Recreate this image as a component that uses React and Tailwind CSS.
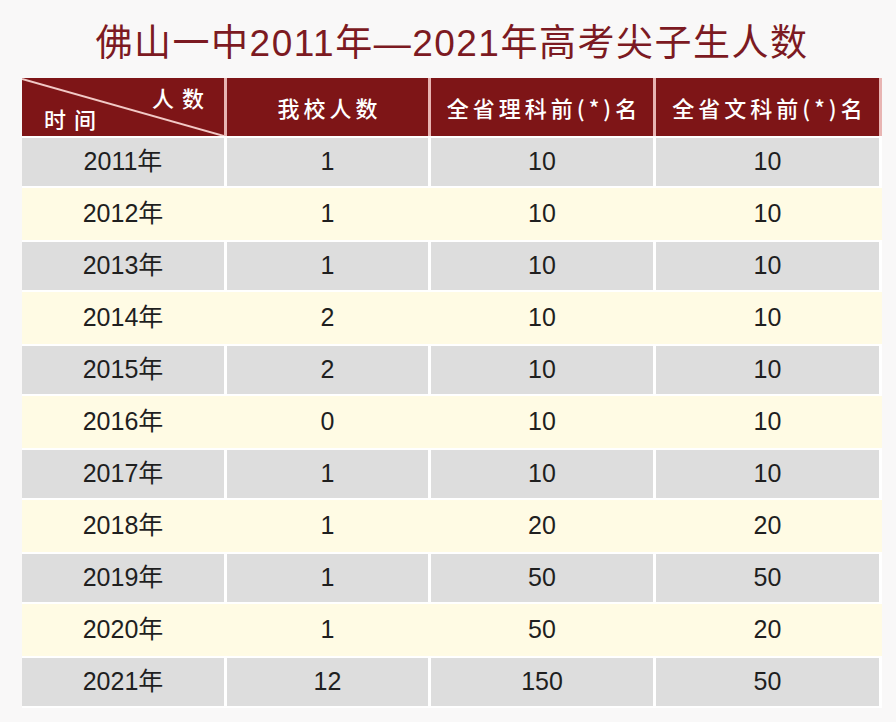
import React from "react"

const rows = [
  ["2011年", "1", "10", "10"],
  ["2012年", "1", "10", "10"],
  ["2013年", "1", "10", "10"],
  ["2014年", "2", "10", "10"],
  ["2015年", "2", "10", "10"],
  ["2016年", "0", "10", "10"],
  ["2017年", "1", "10", "10"],
  ["2018年", "1", "20", "20"],
  ["2019年", "1", "50", "50"],
  ["2020年", "1", "50", "20"],
  ["2021年", "12", "150", "50"],
]

const cols = "grid grid-cols-[202px_201px_222px_223px]"
const cjk = { fontFamily: '"Noto Sans CJK SC", "Noto Sans", sans-serif' }
const num = { fontFamily: '"Liberation Sans", "Noto Sans CJK SC", sans-serif' }

export default function App() {
  return (
    <div className="w-[896px] h-[722px] bg-[#f9f8f8] overflow-hidden" style={cjk}>
      <h1
        className="pt-[21px] h-[78px] text-center text-[37px] leading-[46px] text-[#7c1a22] pl-[8px] tracking-[1.5px]"
        style={num}
      >
        佛山一中2011年—2021年高考尖子生人数
      </h1>

      <div className="ml-[22px] w-[860px] bg-white">
        {/* header */}
        <div className={`${cols} h-[58px] bg-[#e8b4b2] gap-x-[3px] pr-[3px]`}>
          <div className="relative bg-[#7e1517] text-white text-[22px] font-medium">
            <svg className="absolute inset-0" width="202" height="58">
              <line x1="0" y1="1" x2="202" y2="58" stroke="#f2c9c6" strokeWidth="2" />
            </svg>
            <span className="absolute right-[12px] top-[3px] tracking-[8px]">人数</span>
            <span className="absolute left-[22px] bottom-[1px] tracking-[8px]">时间</span>
          </div>
          {["我校人数", "全省理科前(*)名", "全省文科前(*)名"].map((t) => (
            <div
              key={t}
              className="bg-[#7e1517] text-white text-[22px] font-medium flex items-center justify-center tracking-[4px] pl-[4px]"
            >
              {t}
            </div>
          ))}
        </div>

        {/* body */}
        {rows.map((r, i) =>
          i % 2 === 0 ? (
            <div key={r[0]} className={`${cols} h-[52px] gap-x-[3px] py-[2px] bg-white`}>
              {r.map((c, j) => (
                <div
                  key={j}
                  className="bg-[#dddddd] flex items-center justify-center text-[25px] text-[#1f1f1f]"
                >
                  <span style={num}>{c}</span>
                </div>
              ))}
            </div>
          ) : (
            <div key={r[0]} className={`${cols} h-[52px] gap-x-[3px] bg-[#fffbe4]`}>
              {r.map((c, j) => (
                <div key={j} className="flex items-center justify-center text-[25px] text-[#1f1f1f]">
                  <span style={num}>{c}</span>
                </div>
              ))}
            </div>
          )
        )}
      </div>
    </div>
  )
}
